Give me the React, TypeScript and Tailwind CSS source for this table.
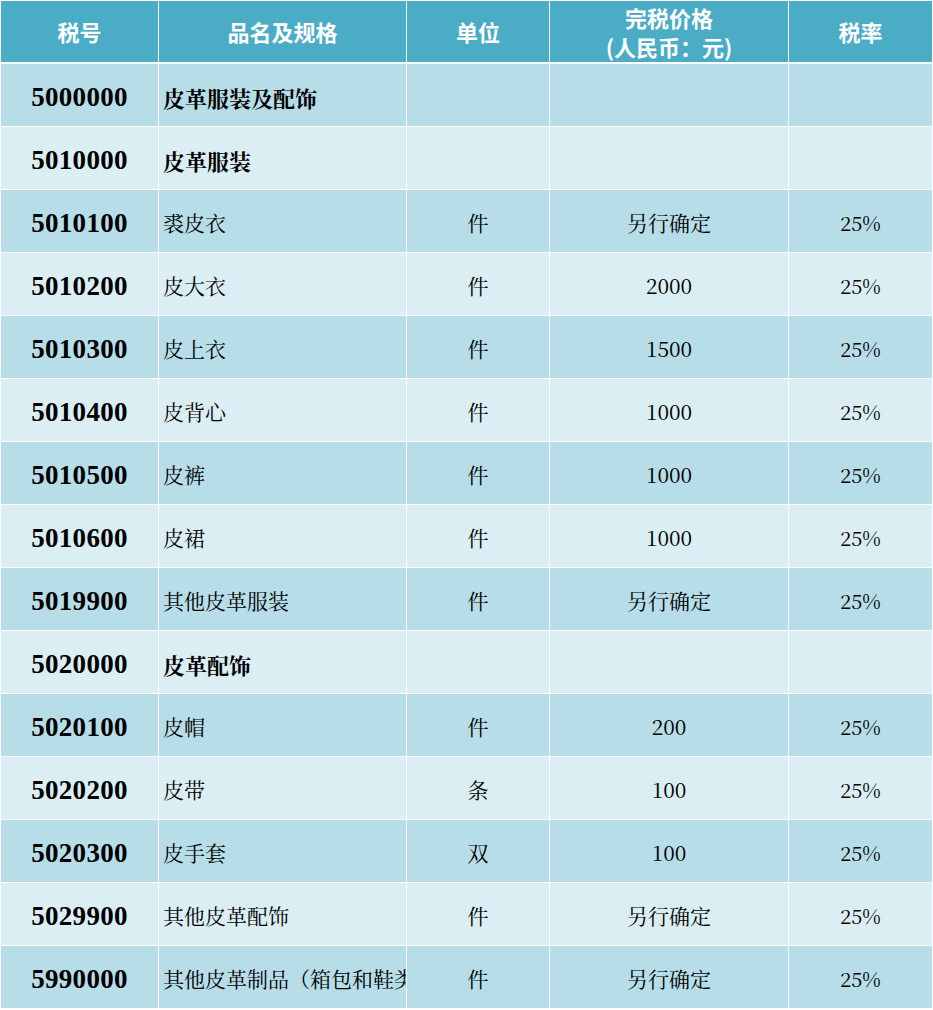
import React from "react";

type Row = { code: string; name: string; unit?: string; price?: string; rate?: string; cat?: boolean };

const rows: Row[] = [
  { code: "5000000", name: "皮革服装及配饰", cat: true },
  { code: "5010000", name: "皮革服装", cat: true },
  { code: "5010100", name: "裘皮衣", unit: "件", price: "另行确定", rate: "25%" },
  { code: "5010200", name: "皮大衣", unit: "件", price: "2000", rate: "25%" },
  { code: "5010300", name: "皮上衣", unit: "件", price: "1500", rate: "25%" },
  { code: "5010400", name: "皮背心", unit: "件", price: "1000", rate: "25%" },
  { code: "5010500", name: "皮裤", unit: "件", price: "1000", rate: "25%" },
  { code: "5010600", name: "皮裙", unit: "件", price: "1000", rate: "25%" },
  { code: "5019900", name: "其他皮革服装", unit: "件", price: "另行确定", rate: "25%" },
  { code: "5020000", name: "皮革配饰", cat: true },
  { code: "5020100", name: "皮帽", unit: "件", price: "200", rate: "25%" },
  { code: "5020200", name: "皮带", unit: "条", price: "100", rate: "25%" },
  { code: "5020300", name: "皮手套", unit: "双", price: "100", rate: "25%" },
  { code: "5029900", name: "其他皮革配饰", unit: "件", price: "另行确定", rate: "25%" },
  { code: "5990000", name: "其他皮革制品（箱包和鞋类除外）", unit: "件", price: "另行确定", rate: "25%" },
];

const serif = "font-['SimSun','Noto_Serif_CJK_SC','Liberation_Serif','Noto_Sans_CJK_SC',serif]";
const head = "font-['Microsoft_YaHei','Noto_Sans_CJK_SC','Noto_Sans',sans-serif]";

export default function App() {
  return (
    <div className="w-[933px] h-[1010px] bg-white">
      <div className="grid grid-cols-[157px_247px_142px_238px_143px] gap-x-px bg-white pl-px pt-px">
        {["税号", "品名及规格", "单位", null, "税率"].map((h, i) => (
          <div
            key={i}
            className={`h-[61px] bg-[#4bacc6] flex flex-col items-center justify-center text-white font-bold ${head} text-[22px] leading-[29px] mb-[2px]`}
          >
            {h ?? (
              <>
                <span>完税价格</span>
                <span>(人民币：元)</span>
              </>
            )}
          </div>
        ))}
        {rows.map((r, idx) => {
          const bg = idx % 2 === 0 ? "bg-[#b6dde8]" : "bg-[#daeef3]";
          const cell = `h-[62px] ${bg} mb-px flex items-center pt-[4px] text-black`;
          return (
            <React.Fragment key={r.code}>
              <div className={`${cell} justify-center font-['Liberation_Serif',serif] font-bold text-[27px] tracking-[0.3px]`}>
                {r.code}
              </div>
              <div
                className={`${cell} pl-[4px] overflow-hidden whitespace-nowrap ${serif} ${
                  r.cat ? "font-bold text-[22px]" : "text-[21px] text-[#111]"
                }`}
              >
                {r.name}
              </div>
              <div className={`${cell} justify-center ${serif} text-[21px]`}>{r.unit}</div>
              <div className={`${cell} justify-center ${serif} text-[21px]`}>{r.price}</div>
              <div className={`${cell} justify-center ${serif} text-[20px]`}>{r.rate}</div>
            </React.Fragment>
          );
        })}
      </div>
    </div>
  );
}
